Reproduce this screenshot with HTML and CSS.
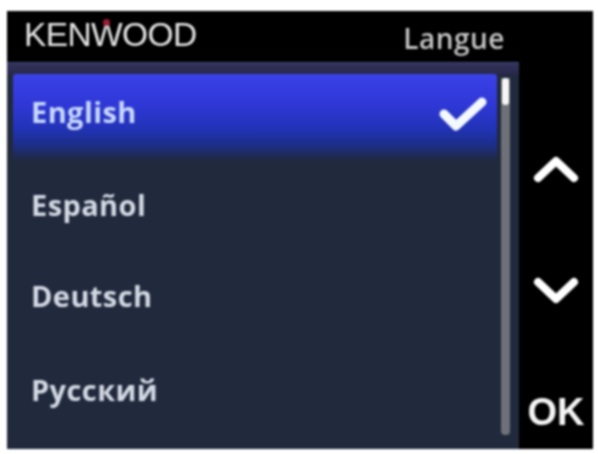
FILE: index.html
```html
<!DOCTYPE html>
<html lang="fr">
<head>
<meta charset="utf-8">
<title>Langue</title>
<link rel="stylesheet" href="styles.css">
</head>
<body>
<main class="screen">
  <header class="topbar">
    <span class="brand">KENWOOD<i class="brand-dot"></i></span>
    <span class="title">Langue</span>
  </header>
  <div class="content">
    <section class="panel">
      <ul class="list">
        <li class="row selected">
          <span>English</span>
          <svg class="check" viewBox="0 0 52 40" aria-hidden="true"><path d="M8 20 L20 32 L46 8" fill="none" stroke="#f4f8ff" stroke-width="9" stroke-linecap="round" stroke-linejoin="round"/></svg>
        </li>
        <li class="row">Español</li>
        <li class="row">Deutsch</li>
        <li class="row last">Русский</li>
      </ul>
      <div class="scrollbar"><div class="thumb"></div></div>
    </section>
    <aside class="controls">
      <svg class="chevron up" viewBox="0 0 46 30" aria-hidden="true"><path d="M5 24 L23 7 L41 24" fill="none" stroke="#fff" stroke-width="8" stroke-linecap="round" stroke-linejoin="round"/></svg>
      <svg class="chevron down" viewBox="0 0 46 30" aria-hidden="true"><path d="M5 6 L23 23 L41 6" fill="none" stroke="#fff" stroke-width="8" stroke-linecap="round" stroke-linejoin="round"/></svg>
      <span class="ok">OK</span>
    </aside>
  </div>
</main>
</body>
</html>
```
FILE: styles.css
```css
* { box-sizing: border-box; }

html, body { margin: 0; height: 100%; background: #fff; overflow: hidden; }

.screen {
  width: 586px;
  height: 438px;
  margin: 11px 0 0 7px;
  background: #000;
  display: flex;
  flex-direction: column;
  font-family: "Open Sans", "Liberation Sans", sans-serif;
  filter: blur(0.8px);
}

.topbar {
  height: 51px;
  flex: none;
  display: flex;
  justify-content: space-between;
  align-items: center;
  padding: 0 88px 0 17px;
}

.brand {
  position: relative;
  font-family: "Liberation Sans", sans-serif;
  font-size: 33.5px;
  letter-spacing: -0.6px;
  color: #e4e4e4;
  line-height: 1;
  padding-bottom: 3px;
}

.brand-dot {
  position: absolute;
  left: 79px;
  top: 1px;
  width: 7px;
  height: 7px;
  border-radius: 50%;
  background: #9c1f35;
}

.title {
  font-size: 28px;
  font-weight: 600;
  letter-spacing: 0.5px;
  color: #c4c4c4;
  padding-top: 2px;
}

.content { flex: 1; display: flex; min-height: 0; }

.panel {
  width: 512px;
  flex: none;
  display: flex;
  border-top: 1px solid #45467a;
  padding: 11px 9px 14px 6px;
  background-image: linear-gradient(#33345c 0, #29294c 11px, #21293d 12px);
}

.list {
  list-style: none;
  margin: 0;
  padding: 0;
  flex: 1;
  display: flex;
  flex-direction: column;
}

.row {
  height: 92px;
  display: flex;
  align-items: center;
  justify-content: space-between;
  padding: 0 9px 4px 18px;
  font-size: 29px;
  font-weight: 700;
  letter-spacing: 0.4px;
  color: #d3dae4;
}

.row.selected {
  height: 87px;
  padding-bottom: 11px;
  color: #c9d9fb;
  border-radius: 3px 3px 0 0;
  background: linear-gradient(#3a41e8 0, #2f38d6 35%, #2233b8 62%, #1c2e88 82%, #21293d 100%);
}

.row.last { padding-bottom: 0; }

.check { width: 52px; height: 40px; margin-top: 5px; }

.scrollbar {
  width: 9px;
  margin: 4px 0 0 4px;
  background: #6f7178;
  border-radius: 0 0 4px 4px;
  flex: none;
}

.thumb { height: 27px; width: 7px; margin: 0 auto; background: #f6f6f6; border-radius: 3px; }

.controls {
  flex: 1;
  display: flex;
  flex-direction: column;
  align-items: center;
  padding-top: 92px;
}

.chevron { width: 46px; height: 30px; flex: none; }
.up { margin-bottom: 92px; }

.ok {
  margin-top: 87px;
  font-family: "Liberation Sans", sans-serif;
  font-size: 38px;
  font-weight: 700;
  line-height: 1;
  color: #f4f4f4;
}
```
